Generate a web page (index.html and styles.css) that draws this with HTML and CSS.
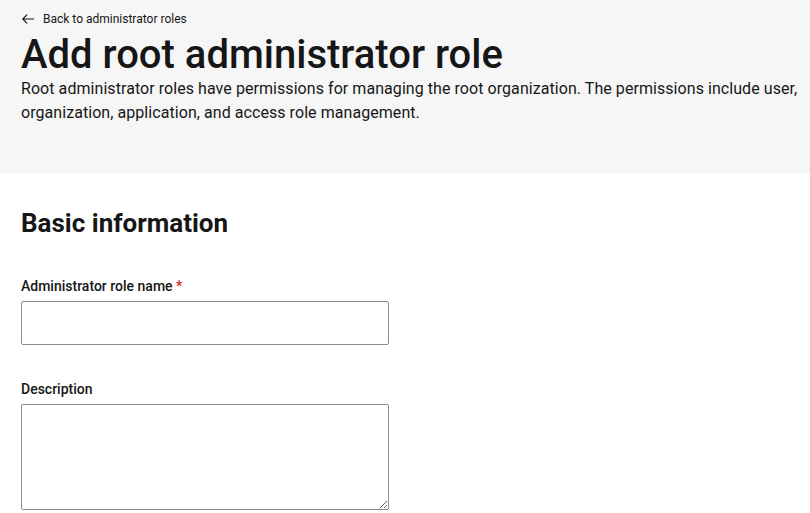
FILE: index.html
```html
<!DOCTYPE html>
<html lang="en">
<head>
<meta charset="utf-8">
<link rel="stylesheet" href="styles.css">
</head>
<body>
<header class="page-header">
  <a class="back-link" href="#">
    <svg class="back-icon" viewBox="0 0 16 16" width="14" height="14" aria-hidden="true"><path d="M15 8H2M7 3L2 8l5 5" fill="none" stroke="#161616" stroke-width="1.3"/></svg>
    <span>Back to administrator roles</span>
  </a>
  <h1 class="page-title">Add root administrator role</h1>
  <p class="page-desc">Root administrator roles have permissions for managing the root organization. The permissions include user, organization, application, and access role management.</p>
</header>
<main class="content">
  <h2 class="section-title">Basic information</h2>
  <div class="field">
    <label class="field-label" for="name">Administrator role name <span class="req">*</span></label>
    <input class="text-input" id="name" type="text">
  </div>
  <div class="field">
    <label class="field-label" for="desc">Description</label>
    <textarea class="text-area" id="desc"></textarea>
  </div>
</main>
</body>
</html>
```
FILE: styles.css
```css
html, body {
  margin: 0;
  padding: 0;
  background: #ffffff;
  font-family: Roboto, "Liberation Sans", sans-serif;
  color: #161616;
}
.page-header {
  background: #f6f6f6;
  padding: 11px 6px 0 21px;
  height: 162px;
  box-sizing: content-box;
}
.back-link {
  display: flex;
  align-items: center;
  gap: 8px;
  font-size: 12px;
  line-height: 16px;
  color: #161616;
  text-decoration: none;
}
.back-icon {
  flex: none;
}
.page-title {
  margin: 4px 0 0;
  font-size: 40px;
  line-height: 48px;
  font-weight: 500;
}
.page-desc {
  margin: -2px 0 0;
  font-size: 16px;
  line-height: 24px;
  font-weight: 400;
  letter-spacing: 0.06px;
}
.content {
  padding: 34px 21px 0;
}
.section-title {
  margin: 0;
  font-size: 26px;
  line-height: 32px;
  font-weight: 700;
}
.field {
  display: flex;
  flex-direction: column;
  width: 368px;
  margin-top: 38px;
}
.field + .field {
  margin-top: 35px;
}
.field-label {
  font-size: 14px;
  line-height: 18px;
  font-weight: 500;
  margin-bottom: 6px;
}
.req {
  color: #da1e28;
}
.text-input, .text-area {
  box-sizing: border-box;
  width: 368px;
  border: 1px solid #8d8d8d;
  border-radius: 2px;
  background: #fff;
  font: inherit;
  margin: 0;
}
.text-input {
  height: 44px;
}
.text-area {
  height: 106px;
  resize: vertical;
}
```
